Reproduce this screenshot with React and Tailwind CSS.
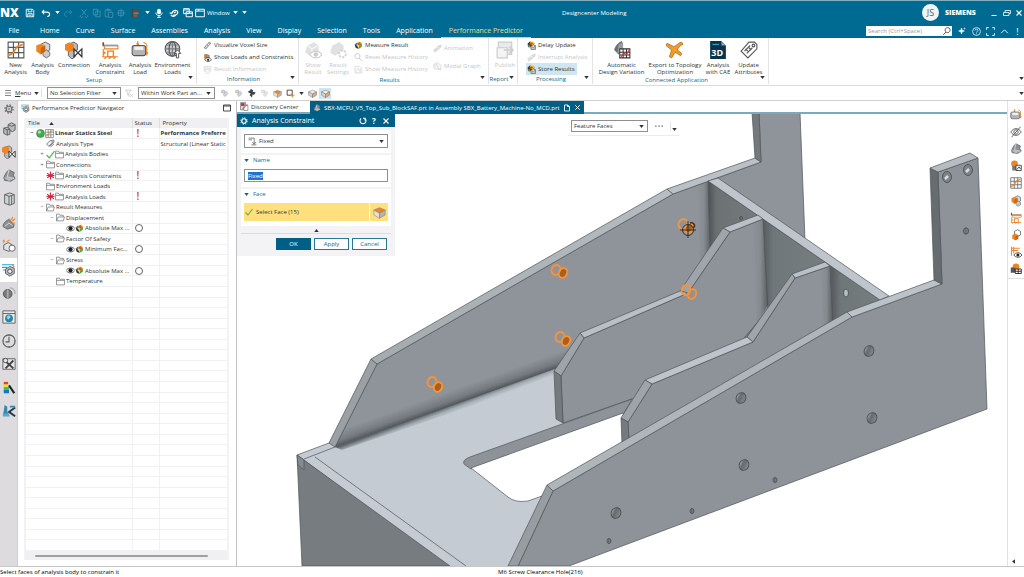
import { useEffect, useRef } from 'react';

const INK = '#55595c';
const ORANGE = '#ef8420';

const glyphs = {
  save: (
    <g fill="none" stroke="currentColor" strokeWidth="1.4">
      <path d="M2 2h10l2 2v10H2z M5 2v4h6V2 M4.5 14V9h7v5 M6 11.5h4" />
    </g>
  ),
  undo: <path d="M5 3 2 6.5 5 10 M2.5 6.5H10c5 0 5 7 0 7" fill="none" stroke="currentColor" strokeWidth="1.8" />,
  redo: <path d="M11 3l3 3.500-3 3.500 M13.500 6.500H6c-5 0-5 7 0 7" fill="none" stroke="currentColor" strokeWidth="1.5" />,
  cut: <path d="M4 2l7 9 M12 2L5 11 M3 11.500a2 2 0 1 0 3 2 M13 11.500a2 2 0 1 1-3 2" fill="none" stroke="currentColor" strokeWidth="1.5" />,
  copy: <path d="M2 2h7v9H2z M6 5h7v9H6z" fill="none" stroke="currentColor" strokeWidth="1.4" />,
  paste: <path d="M2 3h9v3 M2 3v11h4 M5 1.500h3v3H5z M7 7h7v8H7z" fill="none" stroke="currentColor" strokeWidth="1.4" />,
  target: <path d="M8 1v14 M1 8h14 M4 4h8v8H4z" fill="none" stroke="currentColor" strokeWidth="1.3" />,
  align: (
    <g>
      <path d="M2 1v14" stroke="#5b3d30" strokeWidth="2" />
      <path d="M4 2h11v4H4z" fill="#5b4a45" />
      <path d="M4 7h8v3H4z" fill="#c2693a" />
      <path d="M4 11h6v3H4z" fill="#a3542e" />
    </g>
  ),
  mic: (
    <g>
      <rect x="5" y="1" width="6" height="9" rx="3" fill="currentColor" />
      <path d="M3 7c0 7 10 7 10 0 M8 12v3 M5 15h6" fill="none" stroke="currentColor" strokeWidth="1.4" />
    </g>
  ),
  touch: <path d="M1 8h5 M5 9c0-6 9-7 9-2 0 4-5 5-7 4 M3 11c2 3 6 3 8 0 M8 8l3-2" fill="none" stroke="currentColor" strokeWidth="2" />,
  cascade: <path d="M1 1h9v8H1z M1 3h9 M5 6h10v8H5z M5 8.500h10" fill="none" stroke="currentColor" strokeWidth="1.5" />,
  window: <path d="M1 2h14v12H1z M1 5h14 M4 3.500h3" fill="none" stroke="currentColor" strokeWidth="1.5" />,
  grid: (
    <g fill="none">
      <path d="M1 1h14v14H1z M1 5.700h14 M1 10.300h14 M5.700 1v14 M10.300 1v14" stroke={INK} strokeWidth="1" />
      <path d="M1 13l4-2 4-6 5-2" stroke={ORANGE} strokeWidth="1.5" />
    </g>
  ),
  body: (
    <g>
      <path d="M6 3l4-2 4 2v5l-4 3-4-3z" fill="#d4d6d8" stroke={INK} strokeWidth=".8" />
      <path d="M8 9l3-1 3 2v3l-3 2-3-2z" fill="#c8cacc" stroke={INK} strokeWidth=".7" />
      <path d="M2 4l4-1.500L10 4v5l-4 3-4-3z" fill={ORANGE} />
      <path d="M6 6v6l4-3V4z" fill="#c9650d" />
    </g>
  ),
  connection: (
    <g>
      <path d="M5 2l3-1 3 2v5l-3 2-3-2z" fill="#b8babc" stroke={INK} strokeWidth=".8" />
      <path d="M3 9l3-1 3 2v4l-3 2-3-3z" fill="#b8babc" stroke={INK} strokeWidth=".8" />
      <path d="M0 3l4-2 4 2v5l-4 2-4-2z" fill={ORANGE} />
      <path d="M8 7l7 7V7l-7 7z" fill="#fff" stroke="#333" strokeWidth="1.100" />
    </g>
  ),
  constraint: (
    <g fill="none">
      <path d="M2 1v3h13" stroke={INK} strokeWidth="1.500" />
      <path d="M3 4h12v3H3z" stroke={ORANGE} />
      <path d="M2 7v7 M1 14h14 M2 9l2 2 M2 12l2-2 M3 16l2-2 M7 16l2-2 M11 16l2-2" stroke={ORANGE} />
      <rect x="6" y="9" width="5" height="5" stroke={ORANGE} strokeWidth="1.200" />
    </g>
  ),
  load: (
    <g>
      <path d="M6 0v4 M5 2l1 2 1-2 M14 3v9 M13 10l1 2 1-2" stroke={ORANGE} fill="none" />
      <rect x="1" y="4" width="12" height="9" rx="2" fill="#b3b5b7" stroke={INK} strokeWidth=".9" />
      <path d="M3 5h8v3H3z" fill="#eef0f1" />
      <path d="M11 1l3 2" stroke={ORANGE} />
    </g>
  ),
  globe: (
    <g fill="none" stroke={INK} strokeWidth="1">
      <circle cx="7.500" cy="7" r="6.500" fill="#c9cbcc" />
      <path d="M1 7h13 M7.500 .5v13 M2.500 3.500h10 M2.500 10.500h10" stroke="#7c8083" />
      <ellipse cx="7.500" cy="7" rx="3" ry="6.500" />
      <path d="M12 8l3 3h-2v4h-2v-4H9z" fill="#fff" stroke="#444" strokeWidth=".8" />
    </g>
  ),
  ruler: <path d="M2 12L11 2l3 2L5 14z M4 10l2 1 M7 7l2 1 M10 4l2 1" fill="#eee" stroke={INK} strokeWidth="1.200" />,
  loads: (
    <g>
      <path d="M2 2h3v8H2z" fill={ORANGE} />
      <path d="M5 2l6 2v5l-6 2z" fill="#999" stroke="#444" strokeWidth=".7" />
      <path d="M3 12c3-5 9-5 12 0-3 4-9 4-12 0z" fill="#fff" stroke="#222" strokeWidth="1.200" />
      <circle cx="9" cy="12" r="2" fill="#222" />
    </g>
  ),
  info: (
    <g>
      <path d="M2 2h12v9H2z" fill="#bbb" stroke="#888" />
      <path d="M5 8h6v7H5z" fill="#eee" stroke="#888" />
    </g>
  ),
  part: (
    <g>
      <path d="M2 10C4 5 6 2 8 1l6 3-1 3 2 4-5 3-7-1z" fill="#8b8f92" stroke="#54585b" strokeWidth=".8" />
      <path d="M8 1L6 9l8 2" fill="none" stroke="#d5d7d8" strokeWidth="1.200" />
      <path d="M2 10l5-1 6 2-5 3z" fill="#b9bcbe" />
    </g>
  ),
  showResult: (
    <g>
      <path d="M3 4l6-3 4 3v5l-8 4-4-3z" fill="#9c9fa1" />
      <path d="M3 4l4 3 6-3M7 7v5" stroke="#dfe0e0" fill="none" />
      <path d="M5 12c3-4 8-4 11 0-3 4-8 4-11 0z" fill="#fff" stroke="#666" />
      <circle cx="10.500" cy="12" r="2" fill="#555" />
    </g>
  ),
  settings: (
    <g>
      <path d="M3 4l6-3 4 3v5l-8 4-4-3z" fill="#9c9fa1" />
      <circle cx="12" cy="11.500" r="3" fill="#fff" stroke="#666" strokeWidth="1.500" strokeDasharray="2 1" />
    </g>
  ),
  measure: (
    <g>
      <path d="M1 6l5-4v6z" fill="#3472b8" />
      <path d="M6 2l5-1 4 4-5 3z" fill="#f0bd24" />
      <path d="M5 5l5-3 3 4-5 3z" fill="#df4b28" />
      <path d="M1 6l5 2 2 6-5-2z" fill="#33383a" />
      <path d="M8 9l6-4v5l-6 4z" fill="#4ba847" />
      <path d="M5 6l4 1v4l-4-2z" fill="#e8dd37" />
    </g>
  ),
  measureClock: (
    <g>
      <path d="M1 5l4-4 5 1 4 3-6 5-6 1z" fill="#33383a" />
      <path d="M5 2l5-1 4 4-5 3z" fill="#f0bd24" />
      <path d="M4 5l4-3 3 3-4 3z" fill="#df4b28" />
      <path d="M2 7l4 1v4l-4-2z" fill="#4ba847" />
      <path d="M7 8h8v7H7z" fill="#c9cbcc" stroke="#444" />
      <path d="M9 8v3h4V8" fill="#fff" stroke="#444" strokeWidth=".8" />
    </g>
  ),
  search: <path d="M9 9l5 5 M6 1a4.500 4.500 0 1 0 .1 0z" fill="none" stroke="currentColor" strokeWidth="1.500" />,
  chart: <path d="M2 1v13h13 M4 11l3-5 3 4 4-7 M4 3h6 M11 8v5 M14 8v5" fill="none" stroke={INK} strokeWidth="1.200" />,
  animation: (
    <g fill="#8b8f91" stroke="#666" strokeWidth=".7">
      <path d="M7 5l7-4 1 4-6 5z" />
      <path d="M1 10l7-4 1 4-6 5z" />
      <circle cx="9" cy="7" r="2" fill="#ddd" />
    </g>
  ),
  modal: <path d="M1 4l7-3 6 5v8L2 12z M2 8l4-4 3 7 5 2" fill="#ddd" stroke={INK} strokeWidth="1" />,
  publish: (
    <g fill="#ddd" stroke={INK} strokeWidth="1">
      <path d="M2 1h12v11H2z" fill="#bbb" />
      <path d="M1 6h9v9H1z" />
      <path d="M7 8h7M12 5l3 3-3 3" fill="none" strokeWidth="1.500" />
    </g>
  ),
  variation: (
    <g>
      <path d="M1 8C2 4 5 1 8 0l1 8-4 4z" fill="#6e7275" />
      <path d="M5 3l4-2v8l-5 2z" fill="#9b9ea0" />
      <path d="M6 7h9v8H6z M9 7v8 M12 7v8 M6 10h9 M6 12.500h9" fill="#fff" stroke="#333" strokeWidth=".9" />
      <path d="M7 14l3-3 2 1 3-5" fill="none" stroke="#d33" />
    </g>
  ),
  topology: <path d="M1 2l6 3c3-1 4-4 7-4l1 2c-3 1-4 3-5 5l4 3-1 2-5-3-3 5-2-1 2-6-5-4z" fill="#f39a2b" stroke="#b56a10" strokeWidth=".7" />,
  cae: (
    <g>
      <path d="M1 0h10l4 4v12H1z" fill="#07344b" />
      <path d="M11 0v4h4z" fill="#8ca6b2" />
      <path d="M3 3h6" stroke="#35a4c8" />
      <text x="2" y="13" fontSize="8" fontWeight="700" fill="#fff">3D</text>
    </g>
  ),
  tag: (
    <g fill="#fff" stroke={INK} strokeWidth="1">
      <path d="M1 9L8 1h5l2 2v4l-8 8z" />
      <circle cx="12" cy="4" r="1.200" />
      <path d="M4 9l5-5 M6 11l5-5 M5 7l2 2 M8 6l2 2" />
    </g>
  ),
  filter: <path d="M1 2h10L7 7v6L5 11V7z M9 9l5 5 M14 9l-5 5" fill="none" stroke={INK} strokeWidth="1.200" />,
  arrows: <path d="M3 2h5v5H3z M8 6l3-2 3 4-4 5-3-3z M6 9l2 5" fill="#a9acad" stroke={INK} strokeWidth="1" />,
  cross: <path d="M6 1l4 3-1 2 5 1-3 4-2-1-1 5-4-4 2-2-5-3 4-2z" fill="#3e4245" />,
  cubeTop: (
    <g stroke="#777" strokeWidth=".6">
      <path d="M1 5l7-3 7 3-7 4z" fill={ORANGE} />
      <path d="M1 5v6l7 4V9z" fill="#e3e0da" />
      <path d="M15 5v6l-7 4V9z" fill="#b9b3a9" />
    </g>
  ),
  selectBox: (
    <g fill="none">
      <path d="M2 2h9v9H2z" stroke="#333" strokeWidth="1.500" />
      <path d="M11 7v8 M7 11h8" stroke={ORANGE} strokeWidth="2" />
    </g>
  ),
  cubeGrey: (
    <g stroke="#666" strokeWidth=".8">
      <path d="M1 5l7-3 7 3-7 4z" fill="#eee" />
      <path d="M1 5v6l7 4V9z" fill="#d7d7d7" />
      <path d="M15 5v6l-7 4V9z" fill="#ecaa6c" />
    </g>
  ),
  gear: (
    <g fill="none" stroke="currentColor">
      <circle cx="8" cy="8" r="4.500" strokeWidth="1.800" />
      <circle cx="8" cy="8" r="6.500" strokeWidth="2" strokeDasharray="2.500 2.600" />
      <circle cx="8" cy="8" r="1.500" />
    </g>
  ),
  cog: (
    <g fill="none" stroke="currentColor">
      <circle cx="8" cy="8" r="4.500" strokeWidth="2.400" />
      <circle cx="8" cy="8" r="6.500" strokeWidth="1.800" strokeDasharray="2.500 2.600" />
    </g>
  ),
  assembly: (
    <g fill="#b9bbbd" stroke={INK} strokeWidth="1">
      <path d="M7 3l4-2 4 2v6l-3 2-5-2z" />
      <path d="M2 7l4-1 3 2v6l-3 1-4-2z" />
      <path d="M2 7l4 2 3-1 M6 9v6 M7 3l4 2 4-2" fill="none" />
    </g>
  ),
  book: (
    <g fill="#d0d2d3" stroke={INK} strokeWidth="1">
      <path d="M3 3l6-2 5 2v10l-5 2-6-2z" />
      <path d="M3 3l5 2v10 M8 5l6-2 M11 4v10" fill="none" />
    </g>
  ),
  partSpark: (
    <g>
      <path d="M1 12c1-5 4-7 7-8l6 6-1 3-7 2z" fill="#8b8f92" stroke={INK} strokeWidth=".8" />
      <path d="M8 3l2 2 M12 1l-1 4 M15 3l-3 3 M15 8h-3" stroke={ORANGE} strokeWidth="1.300" />
      <path d="M3 12l5-4 4 3" fill="none" stroke="#ddd" />
    </g>
  ),
  shapes: (
    <g fill="#e3e3e3" stroke={INK} strokeWidth="1">
      <path d="M2 7l5-3 5 3v5l-4 2-6-2z" />
      <circle cx="11.500" cy="10.500" r="3.500" fill="#fff" />
      <path d="M2 5V2 M1 3l1-2 1 2 M5 3l4-2" stroke={ORANGE} fill="none" />
    </g>
  ),
  navigator: (
    <g>
      <path d="M0 2h14 M0 5h6 M1 8h4" stroke="#29a3cf" strokeWidth="1.200" />
      <path d="M4 7l5-3 5 2v6l-5 3-5-3z" fill="#b9bcbf" stroke="#52575a" strokeWidth="1" />
      <circle cx="9" cy="9.500" r="2.500" fill="#eef" stroke="#444" />
      <path d="M12 2l2 3" stroke={ORANGE} strokeWidth="1.500" />
    </g>
  ),
  sphere: (
    <g>
      <circle cx="6.500" cy="9" r="5" fill="#777b7d" stroke="#555" />
      <path d="M6.500 4v10" stroke="#aaa" strokeWidth="2" />
      <path d="M9 2a7 7 0 0 1 6 7" fill="none" stroke="#b5b5b5" strokeWidth="2" />
    </g>
  ),
  web: (
    <g>
      <path d="M1 1h14v14H1z M1 4h14" fill="#e9e9e9" stroke={INK} />
      <circle cx="8" cy="9.500" r="4.500" fill="#2386b0" />
      <path d="M5 8l3-2 2 2-3 3z M9 11l3-1" fill="#9fd3e3" />
    </g>
  ),
  clock: (
    <g fill="none" stroke={INK} strokeWidth="1.200">
      <circle cx="8" cy="8" r="7" />
      <path d="M8 3v6H4 M8 1v1 M8 14v1 M1 8h1 M14 8h1" />
    </g>
  ),
  tools: (
    <g>
      <path d="M1 2h14v12H1z" fill="#e8e8e8" stroke={INK} />
      <path d="M3 4l10 9 M13 4L4 13" stroke="#444" strokeWidth="2.200" />
      <circle cx="4" cy="4" r="2.500" fill="#e8e8e8" stroke="#444" />
    </g>
  ),
  spectrum: (
    <g>
      <path d="M2 1h5v3H2z" fill="#ef3c23" />
      <path d="M2 4h5v3H2z" fill="#f6e021" />
      <path d="M2 7h6v3H2z" fill="#35c24b" />
      <path d="M2 10h6v4H2z" fill="#1f6fd8" />
      <path d="M8 5l6 9" stroke="#222" strokeWidth="2.500" />
    </g>
  ),
  arrowTool: (
    <g>
      <path d="M3 1l3 2v6l3 5H1z" fill="#3189b8" />
      <path d="M1 11h7v3H1z" fill="#59a9cf" />
      <path d="M15 4L8 9l7 5" fill="none" stroke="#243a46" strokeWidth="2.200" />
      <path d="M9 3h6" stroke="#3189b8" strokeWidth="2" />
    </g>
  ),
  eyeOff: (
    <g fill="none" stroke={INK} strokeWidth="1.200">
      <path d="M1 8c4-6 10-6 14 0-4 6-10 6-14 0z M14 1L2 15" />
      <circle cx="8" cy="8" r="3" />
    </g>
  ),
  linkBody: (
    <g>
      <circle cx="6" cy="5" r="4.500" fill={ORANGE} />
      <path d="M3 8h6v6H3z" fill="#777" />
      <path d="M8 7h7v7H8z M9 13l3-4 2 3" fill="#fff" stroke="#333" strokeWidth="1.100" />
    </g>
  ),
  bodyAlt: (
    <g>
      <path d="M6 3l4-2 4 2v5l-4 2-4-2z" fill="#fff" stroke={INK} />
      <path d="M3 8l4-2 4 2v5l-4 2-4-2z" fill={ORANGE} />
      <path d="M7 10v5l4-2V8z" fill="#c9650d" />
    </g>
  ),
  constraintEye: (
    <g fill="none">
      <path d="M2 1v12 M2 3h11 M2 6h9 M5 1v9" stroke={ORANGE} strokeWidth="1.300" />
      <path d="M5 12c3-4 8-4 11 0-3 4-8 4-11 0z" fill="#fff" stroke="#222" />
      <circle cx="10.500" cy="12" r="2" fill="#222" />
    </g>
  ),
  loadBody: (
    <g>
      <circle cx="8" cy="5" r="4.500" fill={ORANGE} />
      <path d="M1 6h6v7H1z" fill="#555" />
      <path d="M7 8h8v6H7z M7 11h8 M11 8v6" fill="#fff" stroke="#222" strokeWidth="1.200" />
    </g>
  ),
  discovery: (
    <g>
      <path d="M1 1h9v13H1z" fill="#d8dadb" stroke={INK} />
      <path d="M2 2h6v5H2z" fill="#c92a3d" />
      <path d="M7 6h7v9H7z" fill="#fff" stroke={INK} />
      <path d="M4 13L13 4" stroke="#c92a3d" strokeWidth="1.500" />
    </g>
  ),
  folder: <path d="M1 14V2h5l1 2h8v10z M1 6h14" fill="#fff" stroke="#707376" strokeWidth="1.300" />,
  folderOpen: <path d="M1 14V2h5l1 2h6v3 M1 14L4 7h11l-2 7z" fill="#fff" stroke="#707376" strokeWidth="1.300" />,
  check: <path d="M1 9l5 5L15 2" fill="none" stroke="#4db848" strokeWidth="2.200" />,
  star: <path d="M8 1v14 M2 4l12 8 M14 4L2 12 M1 8h14" stroke="#d4293f" strokeWidth="2" />,
  ball: (
    <g>
      <circle cx="8" cy="8" r="7" fill="#3cb34a" stroke="#555" />
      <circle cx="6" cy="5.500" r="3" fill="#a6e3a5" />
    </g>
  ),
  eye: (
    <g>
      <path d="M0 8c4-6 12-6 16 0-4 6-12 6-16 0z" fill="#fff" stroke="#444" strokeWidth="1.300" />
      <circle cx="8" cy="8" r="3.800" fill="#222" />
    </g>
  ),
  tags: <path d="M1 9L7 3h4v4l-6 6z M6 13l8-7V2h-3 M8 14l6-5" fill="#eee" stroke={INK} strokeWidth="1.300" />,
  fixed: <path d="M1 2h10v10 M8 9l3 4 3-4 M6 14h9 M1 5h6" fill="none" stroke={INK} strokeWidth="1.300" />,
  reset: <path d="M4 3a6 6 0 1 0 8 0 M12 7V2.500h-4" fill="none" stroke="currentColor" strokeWidth="2.200" />,
  popout: <path d="M3 2h6v3h4v9H3z M9 2l4 3" fill="none" stroke="currentColor" strokeWidth="1.800" />,
  close: <path d="M3 3l10 10 M13 3L3 13" stroke="currentColor" strokeWidth="2.200" />,
  restore: <path d="M4 6V3h11v6h-3 M1 7h11v6H1z" fill="none" stroke="currentColor" strokeWidth="1.600" />,
  minimize: <path d="M3 13h10" stroke="currentColor" strokeWidth="2" />,
  square: <path d="M1 2h14v12H1z M1 4h14" fill="none" stroke="#333" strokeWidth="1.800" />,
  sparkle: <path d="M7 2l1.500 4.500L13 8l-4.500 1.500L7 14l-1.500-4.500L1 8l4.500-1.500z M13 1v4 M11 3h4" fill="currentColor" stroke="currentColor" />,
  help: (
    <g fill="none" stroke="currentColor" strokeWidth="1.300">
      <circle cx="8" cy="8" r="7" />
      <path d="M5.500 6c0-3 5-3 5 0 0 2-2.500 2-2.500 4 M8 11.500v1.500" />
    </g>
  ),
  fullscreen: <path d="M1 5V1h4 M11 1h4v4 M15 11v4h-4 M5 15H1v-4" fill="none" stroke="currentColor" strokeWidth="1.500" />,
  up: <path d="M2 11l6-6 6 6" fill="none" stroke="currentColor" strokeWidth="1.600" />,
  menu: <path d="M2 3h12 M2 8h12 M2 13h12" stroke="#555" strokeWidth="1.400" />,
  dots: <path d="M2 7h2v2H2z M7 7h2v2H7z M12 7h2v2h-2z" fill="#555" />,
};

function Icon({ name, className = 'size-[10px]' }) {
  return (
    <svg viewBox="0 0 16 16" className={`shrink-0 ${className}`} aria-hidden="true">
      {glyphs[name]}
    </svg>
  );
}

function Caret({ className = 'text-[#333]' }) {
  return (
    <svg viewBox="0 0 6 4" className={`h-[3px] w-[5px] shrink-0 ${className}`} aria-hidden="true">
      <path d="M0 0h6L3 4z" fill="currentColor" />
    </svg>
  );
}

function IconButton({ name, label, className = '', icon }) {
  return (
    <button type="button" aria-label={label} className={`flex shrink-0 items-center justify-center ${className}`}>
      <Icon name={name} className={icon} />
    </button>
  );
}

function Dropdown({ label, value, className = '', icon }) {
  return (
    <div className={`relative flex items-center border border-[#8d9093] bg-white ${className}`}>
      {icon && <Icon name={icon} className="ml-[3px] size-[9px]" />}
      <select aria-label={label} className="h-full w-full appearance-none bg-transparent pr-2 pl-[2px] outline-none">
        <option>{value}</option>
      </select>
      <span className="pointer-events-none absolute right-[3px]">
        <Caret />
      </span>
    </div>
  );
}

const quickAccess = [
  { name: 'save', label: 'Save', cls: 'w-[16px]' },
  { name: 'undo', label: 'Undo', cls: 'w-[15px]' },
  { caret: true },
  { name: 'redo', label: 'Redo', cls: 'w-[13px] opacity-20' },
  { name: 'cut', label: 'Cut', cls: 'ml-[3px] w-[13px] opacity-25' },
  { name: 'copy', label: 'Copy', cls: 'w-[13px] opacity-25' },
  { name: 'paste', label: 'Paste', cls: 'w-[12px] opacity-25' },
  { name: 'target', label: 'Orient', cls: 'w-[12px] opacity-25' },
  { name: 'align', label: 'Layers', cls: 'ml-[2px] w-[14px]' },
  { caret: true },
  { name: 'mic', label: 'Voice', cls: 'ml-[1px] w-[14px]' },
  { name: 'touch', label: 'Touch mode', cls: 'w-[15px]' },
  { name: 'cascade', label: 'Switch window', cls: 'w-[14px]' },
];

function TitleBar() {
  return (
    <div className="flex h-[23px] items-center">
      <div className="flex w-[562px] shrink-0 items-center">
        <span className="w-[22px] text-[12px] leading-[12px] font-extrabold">NX</span>
        {quickAccess.map((item, i) =>
          item.caret ? (
            <span key={i} className="flex w-[8px] justify-center">
              <Caret className="text-white" />
            </span>
          ) : (
            <IconButton key={i} name={item.name} label={item.label} className={item.cls} />
          ),
        )}
        <button type="button" className="flex items-center gap-[2px]">
          <Icon name="window" />
          Window
          <Caret className="ml-[1px] text-white" />
        </button>
        <span className="ml-[4px]">
          <Caret className="text-white" />
        </span>
      </div>
      <h1 className="flex-1">Designcenter Modeling</h1>
      <span className="flex size-[17px] items-center justify-center rounded-full bg-[#f1f3f4] text-[9px] text-[#5a5f63]">JS</span>
      <span className="ml-[6px] w-[42px] text-[7px] font-extrabold">SIEMENS</span>
      <IconButton name="minimize" label="Minimize" icon="size-[8px]" className="w-[13px]" />
      <IconButton name="restore" label="Restore" icon="size-[8px]" className="w-[13px]" />
      <IconButton name="close" label="Close" icon="size-[8px]" className="w-[11px]" />
    </div>
  );
}

const ribbonTabs = ['Home', 'Curve', 'Surface', 'Assemblies', 'Analysis', 'View', 'Display', 'Selection', 'Tools', 'Application', 'Performance Predictor'];

function RibbonTabs() {
  return (
    <div className="flex h-[14px] items-center text-[7px] font-normal">
      <nav className="flex flex-1 items-stretch">
        <button type="button" className="h-[13px] w-[32px] pr-[4px]">File</button>
        {ribbonTabs.map((tab) => (
          <button
            type="button"
            key={tab}
            className={`h-[13px] border-b px-[8px] ${
              tab === 'Performance Predictor' ? 'border-[#e2c964] text-[#e9dc86]' : 'border-transparent'
            }`}
          >
            {tab}
          </button>
        ))}
      </nav>
      <label className="flex h-[10px] w-[86px] items-center bg-white text-[#444]">
        <input aria-label="Search" placeholder="Search (Ctrl+Space)" className="h-full min-w-0 flex-1 pl-[2px] text-[6px] outline-none placeholder:text-[#9b9b9b]" />
        <Icon name="search" className="mr-[1px] size-[9px] -scale-x-100" />
      </label>
      <div className="flex pl-[2px]">
        <IconButton name="sparkle" label="Copilot" icon="size-[8px]" className="w-[15px]" />
        <IconButton name="help" label="Help" icon="size-[9px]" className="w-[14px]" />
        <IconButton name="fullscreen" label="Full screen" icon="size-[9px]" className="w-[14px]" />
        <IconButton name="up" label="Collapse ribbon" icon="size-[9px]" className="w-[14px]" />
        <button type="button" aria-label="Alerts" className="w-[13px] text-[9px] leading-[9px]">!</button>
      </div>
    </div>
  );
}

function BigButton({ icon, lines, className, disabled }) {
  return (
    <button type="button" disabled={disabled} className={`flex shrink-0 flex-col items-center pt-[3px] leading-[7px] disabled:opacity-30 ${className}`}>
      <Icon name={icon} className="mb-[3px] size-[18px]" />
      {lines.map((line) => (
        <span key={line} className="whitespace-nowrap">{line}</span>
      ))}
    </button>
  );
}

function SmallButton({ icon, label, disabled, active }) {
  return (
    <button
      type="button"
      disabled={disabled}
      className={`flex h-[12px] items-center gap-[2px] pr-[2px] pl-[1px] whitespace-nowrap disabled:opacity-30 ${active ? 'bg-[#cfe5ef]' : ''}`}
    >
      <Icon name={icon} className="size-[9px]" />
      {label}
    </button>
  );
}

function Group({ title, className, children }) {
  return (
    <section className={`relative flex shrink-0 flex-col border-r border-[#e3e3e3] ${className}`}>
      <div className="flex flex-1">{children}</div>
      <h2 className="h-[9px] pr-[8px] text-center leading-[8px] text-[#0f6a8b]">{title}</h2>
      <span className="absolute right-[3px] bottom-[5px] flex">
        <Caret />
      </span>
    </section>
  );
}

function Ribbon() {
  return (
    <div className="flex h-[48px] border-b border-[#dcdcdc] bg-white pb-[1px]">
      <Group title="Setup" className="w-[197px]">
        <BigButton icon="grid" lines={['New', 'Analysis']} className="w-[31px]" />
        <BigButton icon="body" lines={['Analysis', 'Body']} className="w-[23px]" />
        <BigButton icon="connection" lines={['Connection']} className="w-[40px]" />
        <BigButton icon="constraint" lines={['Analysis', 'Constraint']} className="w-[32px]" />
        <BigButton icon="load" lines={['Analysis', 'Load']} className="w-[28px]" />
        <BigButton icon="globe" lines={['Environment', 'Loads']} className="w-[37px]" />
      </Group>
      <Group title="Information" className="w-[102px]">
        <div className="flex flex-col items-start pt-[1px] pl-[5px]">
          <SmallButton icon="ruler" label="Visualize Voxel Size" />
          <SmallButton icon="loads" label="Show Loads and Constraints" />
          <SmallButton icon="info" label="Result Information" disabled />
        </div>
      </Group>
      <Group title="Results" className="w-[190px]">
        <BigButton icon="showResult" lines={['Show', 'Result']} className="w-[28px]" disabled />
        <BigButton icon="settings" lines={['Result', 'Settings']} className="w-[22px]" disabled />
        <div className="flex w-[79px] flex-col items-start pt-[1px] pl-[4px]">
          <SmallButton icon="measure" label="Measure Result" />
          <SmallButton icon="search" label="Reset Measure History" disabled />
          <SmallButton icon="chart" label="Show Measure History" disabled />
        </div>
        <div className="flex flex-col items-start gap-[6px] pt-[4px] pl-[4px]">
          <SmallButton icon="animation" label="Animation" disabled />
          <SmallButton icon="modal" label="Modal Graph" disabled />
        </div>
      </Group>
      <Group title="Report" className="w-[29px]">
        <BigButton icon="publish" lines={['Publish']} className="w-[32px]" disabled />
      </Group>
      <Group title="Processing" className="w-[75px]">
        <div className="flex flex-col items-start pt-[1px] pl-[8px]">
          <SmallButton icon="measureClock" label="Delay Update" />
          <SmallButton icon="animation" label="Interrupt Analysis" disabled />
          <SmallButton icon="measureClock" label="Store Results" active />
        </div>
      </Group>
      <Group title="Connected Application" className="w-[176px]">
        <BigButton icon="variation" lines={['Automatic', 'Design Variation']} className="ml-[3px] w-[51px]" />
        <BigButton icon="topology" lines={['Export to Topology', 'Optimization']} className="w-[56px]" />
        <BigButton icon="cae" lines={['Analysis', 'with CAE']} className="w-[30px]" />
        <BigButton icon="tag" lines={['Update', 'Attributes']} className="w-[31px]" />
      </Group>
      <span className="flex flex-1 items-end justify-end pb-[4px]">
        <Caret />
      </span>
    </div>
  );
}

function SelectionBar() {
  return (
    <div className="flex h-[15px] items-center border-b border-[#cfcfcf] bg-white">
      <button type="button" className="flex w-[42px] items-center gap-[3px] border-r border-[#e0e0e0] pl-[4px]">
        <Icon name="menu" className="size-[8px]" />
        <span><u>M</u>enu</span>
        <Caret />
      </button>
      <Dropdown label="Selection filter" value="No Selection Filter" className="ml-[5px] h-[12px] w-[74px]" />
      <IconButton name="filter" label="Filter" icon="size-[9px]" className="w-[17px] opacity-40" />
      <Dropdown label="Selection scope" value="Within Work Part an..." className="h-[12px] w-[77px]" />
      <IconButton name="arrows" label="Snap" icon="size-[9px]" className="ml-[3px] w-[13px] opacity-50" />
      <IconButton name="arrows" label="Chain" icon="size-[9px]" className="w-[14px] opacity-50" />
      <IconButton name="cross" label="Point" icon="size-[10px]" className="w-[13px]" />
      <IconButton name="arrows" label="Stop at intersection" icon="size-[9px]" className="w-[13px] opacity-30" />
      <IconButton name="cubeTop" label="Face rule" icon="size-[9px]" className="w-[13px]" />
      <IconButton name="selectBox" label="Rectangle select" icon="size-[9px]" className="w-[13px]" />
      <span className="mx-[2px] flex">
        <Caret />
      </span>
      <IconButton name="cubeGrey" label="Shaded" icon="size-[9px]" className="w-[13px]" />
      <span className="bg-[#cfe5ef] p-[1px]">
        <IconButton name="cubeGrey" label="Highlight hidden" icon="size-[9px]" className="w-[10px]" />
      </span>
      <span className="flex flex-1 justify-end">
        <Caret />
      </span>
    </div>
  );
}

const leftRail = ['assembly', 'connection', 'part', 'book', 'partSpark', 'shapes', 'navigator', 'sphere', 'web', 'clock', 'tools', 'spectrum', 'arrowTool'];

function LeftRail() {
  return (
    <nav className="w-[18px] shrink-0 border-r border-[#cfcdd0] bg-[#dddbdd] text-[#66696b]">
      <IconButton name="gear" label="Settings" className="h-[16px] w-full" />
      <div className="flex h-[306px] flex-col">
        {leftRail.map((name) => (
          <IconButton
            key={name}
            name={name}
            label={name}
            icon="size-[14px]"
            className={`w-full flex-1 ${name === 'navigator' ? 'bg-white' : ''}`}
          />
        ))}
      </div>
    </nav>
  );
}

const tree = [
  { title: 'Linear Statics Steel', level: 0, toggle: '−', icons: ['ball', 'grid'], alert: true, property: 'Performance Preferre', bold: true },
  { title: 'Analysis Type', level: 1, icons: ['tags'], property: 'Structural (Linear Static' },
  { title: 'Analysis Bodies', level: 1, toggle: '+', icons: ['check', 'folder'] },
  { title: 'Connections', level: 1, toggle: '+', icons: ['folder'] },
  { title: 'Analysis Constraints', level: 1, icons: ['star', 'folder'], alert: true },
  { title: 'Environment Loads', level: 1, icons: ['folder'] },
  { title: 'Analysis Loads', level: 1, icons: ['star', 'folder'], alert: true },
  { title: 'Result Measures', level: 1, toggle: '−', icons: ['folderOpen'] },
  { title: 'Displacement', level: 2, toggle: '−', icons: ['folderOpen'] },
  { title: 'Absolute Max ...', level: 3, icons: ['eye', 'measure'], pending: true },
  { title: 'Factor Of Safety', level: 2, toggle: '−', icons: ['folderOpen'] },
  { title: 'Minimum Fac...', level: 3, icons: ['eye', 'measure'], pending: true },
  { title: 'Stress', level: 2, toggle: '−', icons: ['folderOpen'] },
  { title: 'Absolute Max ...', level: 3, icons: ['eye', 'measure'], pending: true },
  { title: 'Temperature', level: 2, icons: ['folder'] },
];

const indents = ['pl-[2px]', 'pl-[12px]', 'pl-[22px]', 'pl-[32px]'];

function TreeRow({ item }) {
  return (
    <tr className={`h-[10px] ${item.bold ? 'font-bold' : ''}`}>
      <td className="border-b border-[#f1f1f3] p-0">
        <div className={`flex h-[9px] items-center whitespace-nowrap ${indents[item.level]}`}>
          <span className="w-[8px] shrink-0 text-center leading-[8px] text-[#666]">{item.toggle}</span>
          {item.icons.map((name) => (
            <Icon key={name} name={name} className="size-[9px]" />
          ))}
          <span className="ml-[1px] leading-[8px]">{item.title}</span>
        </div>
      </td>
      <td className="border-x border-b border-[#f1f1f3] p-0 pl-[2px]">
        {item.alert && <div className="pl-[2px] text-[10px] leading-[9px] font-semibold text-[#d23a46]">!</div>}
        {item.pending && <div className="size-[8px] rounded-full border border-[#666]" />}
      </td>
      <td className="border-b border-[#f1f1f3] p-0 pl-px leading-[8px] whitespace-nowrap">{item.property}</td>
    </tr>
  );
}

function Navigator() {
  const blanks = Array.from({ length: 25 });

  return (
    <aside className="flex w-[219px] shrink-0 flex-col border-r border-[#bfc1c3] bg-white pr-[7px] pb-[6px] pl-[6px]">
      <div className="flex h-[14px] shrink-0 items-center">
        <Icon name="navigator" className="-ml-[3px] size-[9px]" />
        <h2 className="ml-[2px] flex-1 text-[6px]">Performance Predictor Navigator</h2>
        <Icon name="square" className="-mr-[2px] size-[8px]" />
      </div>
      <div className="mt-[3px] flex flex-1 flex-col border-x-2 border-[#f2f1f3]">
        <table className="w-full flex-1 table-fixed border-collapse">
          <thead className="bg-[#f0eff1]">
            <tr className="h-[10px] text-left leading-[8px]">
              <th className="w-[106px] p-0 pl-[2px] font-normal">
                <span className="flex items-center gap-[9px]">
                  Title
                  <Caret className="rotate-180" />
                </span>
              </th>
              <th className="w-[27px] border-x border-[#dedde0] p-0 pl-[2px] font-normal">Status</th>
              <th className="p-0 pl-[3px] font-normal">Property</th>
            </tr>
          </thead>
          <tbody>
            {tree.map((item, i) => (
              <TreeRow key={i} item={item} />
            ))}
            {blanks.map((_, i) => (
              <tr key={i} className="h-[10px]">
                <td className="border-b border-[#f1f1f3] p-0" />
                <td className="border-x border-b border-[#f1f1f3] p-0" />
                <td className="border-b border-[#f1f1f3] p-0" />
              </tr>
            ))}
          </tbody>
        </table>
        <div className="flex h-[9px] shrink-0 items-center bg-[#f0eff1] pr-[19px] pl-[9px]">
          <div className="h-[2px] w-full rounded bg-[#9fa0a2]" />
        </div>
      </div>
    </aside>
  );
}

function DocumentTabs() {
  return (
    <div className="flex h-[13px] shrink-0 items-stretch border-b-2 border-[#7ea9bb] bg-white">
      <button type="button" className="flex w-[73px] items-center gap-[2px] pl-[3px]">
        <Icon name="discovery" className="size-[9px]" />
        Discovery Center
      </button>
      <div className="-mb-[2px] flex items-center gap-[3px] bg-[#005f87] px-[3px] whitespace-nowrap text-white">
        <Icon name="part" className="size-[8px]" />
        <span>SBX-MCFU_V5_Top_Sub_BlockSAF.prt in Assembly SBX_Battery_Machine-No_MCD.prt</span>
        <IconButton name="popout" label="Pop out" icon="size-[8px]" />
        <IconButton name="close" label="Close tab" icon="size-[7px]" />
      </div>
    </div>
  );
}

function SectionTitle({ children }) {
  return (
    <h3 className="flex items-center gap-[4px] text-[#0f6a8b]">
      <Caret className="text-[#0f6a8b]" />
      {children}
    </h3>
  );
}

function ConstraintDialog() {
  const nameRef = useRef(null);

  useEffect(() => {
    nameRef.current.focus();
    nameRef.current.select();
  }, []);

  return (
    <div role="dialog" aria-label="Analysis Constraint" className="absolute top-0 left-0 w-[158px] bg-[#f3f2f4] pb-[6px]">
      <div className="flex h-[13px] items-center bg-[#005f87] px-[3px] text-[7px] font-normal text-white">
        <Icon name="cog" className="size-[8px]" />
        <h2 className="ml-[4px] flex-1">Analysis Constraint</h2>
        <IconButton name="reset" label="Reset" icon="size-[8px]" className="w-[10px]" />
        <button type="button" aria-label="Help" className="w-[12px] text-[8px] leading-[8px] font-bold">?</button>
        <IconButton name="close" label="Close dialog" icon="size-[8px]" className="w-[12px]" />
      </div>
      <div className="flex flex-col gap-[2px] px-[4px] pt-[3px]">
        <div className="bg-white px-[3px] pt-[4px] pb-[5px]">
          <Dropdown label="Constraint type" value="Fixed" icon="fixed" className="h-[14px]" />
        </div>
        <div className="bg-white px-[3px] pt-[1px] pb-[5px]">
          <SectionTitle>Name</SectionTitle>
          <input
            ref={nameRef}
            aria-label="Name"
            defaultValue="Fixed"
            className="mt-[5px] block h-[13px] w-full border border-[#8d9093] px-[3px] outline-none selection:bg-[#1976d2] selection:text-white"
          />
        </div>
        <div className="bg-white px-[3px] pt-[1px] pb-[5px]">
          <SectionTitle>Face</SectionTitle>
          <div className="mt-[5px] flex h-[18px] gap-px">
            <button type="button" className="flex flex-1 items-center gap-[3px] bg-[#ffe07c] pl-[1px]">
              <Icon name="check" className="size-[8px]" />
              Select Face (15)
            </button>
            <IconButton name="cubeTop" label="Face selection" icon="size-[13px]" className="w-[18px] bg-[#ffe07c]" />
          </div>
        </div>
        <div className="flex h-[6px] items-center justify-center border-b border-[#dcdbde]">
          <Caret className="rotate-180" />
        </div>
      </div>
      <div className="mt-[4px] flex justify-end gap-[3px] pr-[8px]">
        <button type="button" className="h-[12px] w-[35px] border border-[#005f87] bg-[#005f87] text-white">OK</button>
        <button type="button" className="h-[12px] w-[35px] border border-[#2b7796] bg-white text-[#0f6a8b]">Apply</button>
        <button type="button" className="h-[12px] w-[35px] border border-[#2b7796] bg-white text-[#0f6a8b]">Cancel</button>
      </div>
    </div>
  );
}

const boltHoles = [[741, 398], [744, 465], [869, 351], [872, 418], [616, 513]];
const pinHoles = [[692, 511], [775, 480], [609, 541]];
const picked = [
  { a: [556, 270], b: [563, 273], solid: true },
  { a: [560, 337], b: [566, 341], solid: true },
  { a: [432, 382], b: [438, 387], solid: true },
  { a: [686, 290], b: [692, 294] },
  { a: [683, 224], b: [689, 228], solid: true },
];

function Model() {
  return (
    <svg viewBox="237 114 770 452" preserveAspectRatio="xMinYMin slice" className="absolute inset-0 size-full" aria-label="Bracket assembly">
      <defs>
        <linearGradient id="backFace" gradientUnits="userSpaceOnUse" x1="440" y1="410" x2="435" y2="396">
          <stop offset="0" stopColor="#50565a" />
          <stop offset=".35" stopColor="#747a80" />
          <stop offset="1" stopColor="#8f949a" />
        </linearGradient>
        <linearGradient id="floorShade" gradientUnits="userSpaceOnUse" x1="440" y1="409" x2="443" y2="417">
          <stop offset="0" stopColor="#5c6369" />
          <stop offset=".5" stopColor="#a4acb3" />
          <stop offset="1" stopColor="#c4cbd2" />
        </linearGradient>
        <linearGradient id="wall" gradientUnits="userSpaceOnUse" x1="708" y1="0" x2="880" y2="0">
          <stop offset="0" stopColor="#4c5153" />
          <stop offset=".05" stopColor="#6c7273" />
          <stop offset=".3" stopColor="#757c7d" />
          <stop offset=".32" stopColor="#565b5e" />
          <stop offset=".38" stopColor="#70777a" />
          <stop offset=".69" stopColor="#777e80" />
          <stop offset=".72" stopColor="#565b5e" />
          <stop offset=".77" stopColor="#6f7678" />
          <stop offset="1" stopColor="#777e7e" />
        </linearGradient>
        <linearGradient id="shadeRight">
          <stop offset="0" stopColor="#454a4d" stopOpacity="0" />
          <stop offset=".5" stopColor="#454a4d" stopOpacity=".12" />
          <stop offset="1" stopColor="#454a4d" stopOpacity=".75" />
        </linearGradient>
        <linearGradient id="edgeTop" gradientUnits="userSpaceOnUse" x1="370" y1="360" x2="760" y2="160">
          <stop offset="0" stopColor="#a4abaf" />
          <stop offset=".7" stopColor="#b3bbc0" />
          <stop offset="1" stopColor="#c2c8cf" />
        </linearGradient>
        <linearGradient id="hole" x1="0" y1="0" x2="1" y2="0">
          <stop offset="0" stopColor="#a3a8ab" />
          <stop offset=".35" stopColor="#646a6d" />
          <stop offset="1" stopColor="#84898c" />
        </linearGradient>
      </defs>

      <g stroke="#4f5559" strokeWidth=".7" strokeLinejoin="round">
        {/* floor and front box */}
        <path d="M297 455L329 443 560 355 660 400 515 568H450z" fill="#c4cbd2" />
        <path d="M335 447L557 367 560 376 342 450z" fill="url(#floorShade)" stroke="none" />
        <path d="M297 455L450 566H302z" fill="#767c7f" />
        <path d="M304 459L335 447 M315 457L466 566" fill="none" />
        <path d="M297 455l7 5v10l-6-5z" fill="#858b8e" />

        {/* rear side plate */}
        <path d="M335 447L377 364 673 194 761 162 759 112H800L805 240 720 310 556 368z" fill="url(#backFace)" />
        <path d="M329 443L371 359 377 364 335 447z" fill="#9aa0a4" />
        <path d="M371 359L667 189 673 194 377 364z" fill="url(#edgeTop)" />
        <path d="M667 189L755 158 761 162 673 194z" fill="#b9c0c6" />
        <path d="M752 112H759L761 162 755 158z" fill="#73797c" />
        <path d="M697 185L708 182 711 246 700 263z" fill="url(#shadeRight)" stroke="none" />

        {/* cross wall */}
        <path d="M708 181L880 300 832 322 800 345 740 345 710 245z" fill="url(#wall)" />
        <path d="M708 181L718 178 889 296 880 300z" fill="#bec5cd" />

        {/* inner rib */}
        <path d="M763 219L730 232 688 293 584 338 561 376 563 423 632 399 700 390 768 310z" fill="#8e9399" />
        <path d="M753 223L763 219 768 305 757 324z" fill="url(#shadeRight)" stroke="none" />
        <path d="M758 215L723 228 730 232 763 219z" fill="#b9c0c7" />
        <path d="M723 228L680 291 688 293 730 232z" fill="#9fa5aa" />
        <path d="M680 291L580 333 584 338 688 293z" fill="#b9bfc6" />
        <path d="M580 333L554 371 561 376 584 338z" fill="#9ea4a8" />
        <path d="M554 371L561 376 563 423 556 419z" fill="#747a7d" />

        {/* floor cut-out */}
        <path d="M470 457Q462 460 464 464L471 469 624 413 632 399z" fill="#8e9399" />
        <path d="M471 468L508 497Q515 503 528 501L542 496 553 486 629 442 623 413z" fill="#fff" />

        {/* outer rib */}
        <path d="M830 266L795 278 753 342 652 384 628 422 629 440 700 405 833 325z" fill="#8e9399" />
        <path d="M820 269L830 266 833 322 823 329z" fill="url(#shadeRight)" stroke="none" />
        <path d="M825 262L792 274 795 278 830 266z" fill="#b9c0c7" />
        <path d="M792 274L747 337 753 342 795 278z" fill="#9fa5aa" />
        <path d="M747 337L645 380 652 384 753 342z" fill="#bec4cb" />
        <path d="M645 380L621 418 628 422 652 384z" fill="#9ea4a8" />
        <path d="M621 418L628 422 629 441 622 444z" fill="#747a7d" />

        {/* near side plate */}
        <path d="M518 566L553 491 852 317 942 284 938 172 978 158 987 409 569 566z" fill="#8e939a" />
        <path d="M508 566L547 485 553 491 518 566z" fill="#979da0" />
        <path d="M547 485L847 312 852 317 553 491z" fill="#afb6ba" />
        <path d="M847 312L934 280 942 284 852 317z" fill="#bbc2c8" />
        <path d="M930 168L938 172 942 284 934 280z" fill="#666c6f" />
        <path d="M930 168L970 153 978 158 938 172z" fill="#b5bdc2" />
      </g>

      <g fill="url(#hole)" stroke="#4b5154" strokeWidth=".9">
        {boltHoles.map(([x, y]) => (
          <ellipse key={`${x}-${y}`} cx={x} cy={y} rx="4.800" ry="5.500" transform={`rotate(25 ${x} ${y})`} />
        ))}
        {pinHoles.map(([x, y]) => (
          <ellipse key={`${x}-${y}`} cx={x} cy={y} rx="2" ry="2.500" />
        ))}
        <ellipse cx="966" cy="231" rx="2.600" ry="3.200" />
        <ellipse cx="947" cy="177" rx="4.500" ry="5.500" fill="#7d8386" />
        <ellipse cx="968" cy="170" rx="4.500" ry="5.500" fill="#7d8386" />
        <ellipse cx="846" cy="293" rx="2.500" ry="4" fill="#b6bbbd" />
        <ellipse cx="741" cy="218" rx="1.500" ry="1.500" />
      </g>
      <path d="M945 179l3-3M966 172l3-3" stroke="#d9dddf" strokeWidth="2.500" />

      <g fill="none" stroke="#f5923a" strokeWidth="2">
        {picked.map(({ a, b, solid }) => (
          <g key={a.join('-')}>
            <ellipse cx={a[0]} cy={a[1]} rx="4.300" ry="5" transform={`rotate(25 ${a[0]} ${a[1]})`} />
            <ellipse cx={b[0]} cy={b[1]} rx="4" ry="5" transform={`rotate(25 ${b[0]} ${b[1]})`} fill={solid ? '#a8601f' : 'none'} />
          </g>
        ))}
      </g>

      {/* pick cursor */}
      <g fill="none" stroke="#2e3133" strokeWidth="1">
        <circle cx="688" cy="230" r="5.500" />
        <path d="M688 221v17 M680 230h16" />
        <path d="M690 223c4-1 6 3 3 5" strokeWidth="1.500" />
      </g>
    </svg>
  );
}

function Viewport() {
  return (
    <main className="flex min-w-0 flex-1 flex-col bg-white">
      <DocumentTabs />
      <div className="relative flex-1 overflow-hidden">
        <Model />
        <ConstraintDialog />
        <div className="absolute top-[6px] left-[331px] flex items-center border-b border-[#ececec] bg-white pr-[2px] pb-[3px] pl-[3px]">
          <Dropdown label="Face rule" value="Feature Faces" className="h-[12px] w-[77px]" />
          <IconButton name="dots" label="More" icon="size-[10px]" className="w-[22px]" />
          <span className="border-l border-[#e5e5e5] pt-[6px] pl-[1px]">
            <Caret />
          </span>
        </div>
      </div>
    </main>
  );
}

const rightRail = ['load', 'eyeOff', 'part', 'linkBody', 'grid', 'body', 'constraint', 'bodyAlt', 'constraintEye', 'loadBody'];

function RightRail() {
  return (
    <nav className="flex w-[17px] shrink-0 flex-col border-l border-[#e2e2e2] bg-white pt-[5px]">
      <div className="flex h-[173px] flex-col border-b border-[#dedede]">
        {rightRail.map((name) => (
          <IconButton key={name} name={name} label={name} icon="size-[12px]" className="w-full flex-1" />
        ))}
      </div>
      <span className="mt-auto pb-[3px] pl-[3px]">
        <Caret className="rotate-90" />
      </span>
    </nav>
  );
}

export default function App() {
  return (
    <div className="flex h-screen flex-col overflow-hidden bg-white font-['Open_Sans','Noto_Sans',sans-serif] text-[6px] leading-[8px] font-medium text-[#2f3336]">
      <header className="shrink-0 border-t border-[#7fb0c2] bg-[#006b92] text-white">
        <TitleBar />
        <RibbonTabs />
      </header>
      <div className="shrink-0">
        <Ribbon />
        <SelectionBar />
      </div>
      <div className="flex min-h-0 flex-1">
        <LeftRail />
        <Navigator />
        <Viewport />
        <RightRail />
      </div>
      <footer className="flex h-[11px] shrink-0 items-center border-t border-[#c4c6c8] text-black">
        <span className="w-[498px]">Select faces of analysis body to constrain it</span>
        <span>M6 Screw Clearance Hole(216)</span>
      </footer>
    </div>
  );
}
